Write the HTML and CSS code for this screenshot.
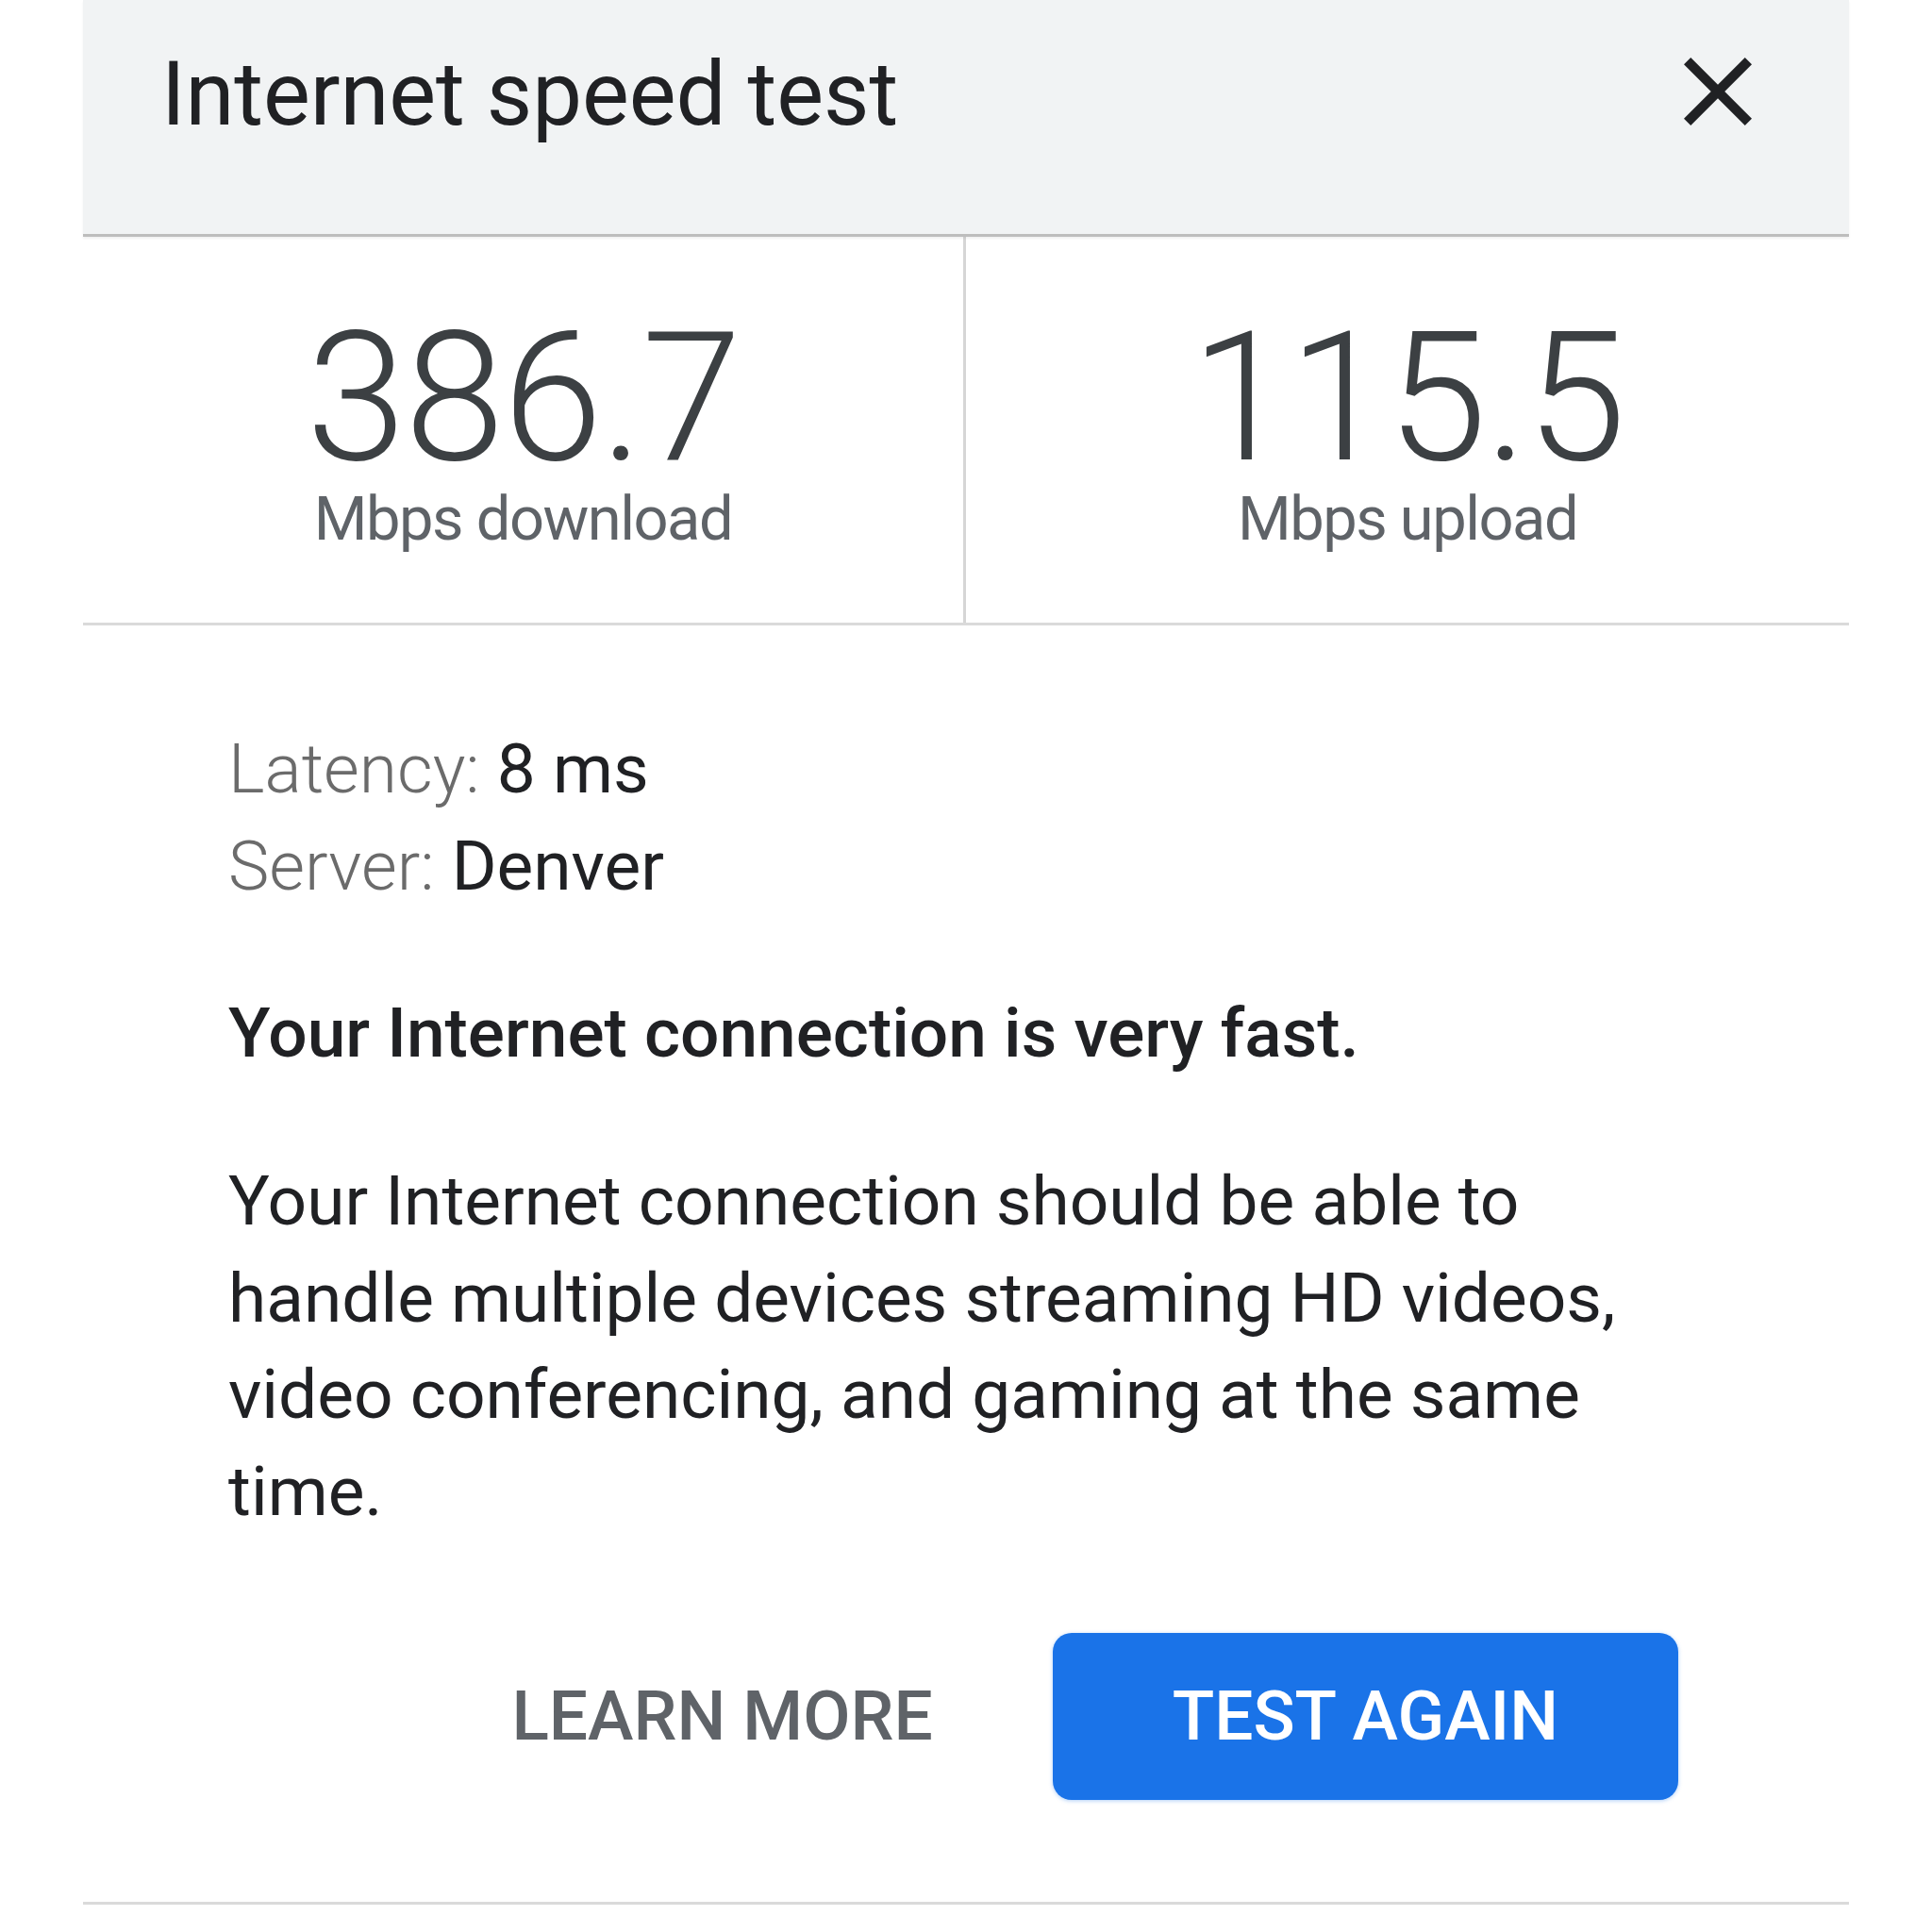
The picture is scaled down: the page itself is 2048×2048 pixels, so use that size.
FILE: index.html
```html
<!DOCTYPE html>
<html lang="en">
<head>
<meta charset="utf-8">
<title>Internet speed test</title>
<link rel="stylesheet" href="styles.css">
</head>
<body>
<div class="card">
  <header class="header">
    <h1 class="title">Internet speed test</h1>
    <svg class="close" viewBox="5 5 14 14" width="72" height="72" aria-label="Close">
      <path d="M19 6.41L17.59 5 12 10.59 6.41 5 5 6.41 10.59 12 5 17.59 6.41 19 12 13.41 17.59 19 19 17.59 13.41 12z" fill="#202124"/>
    </svg>
  </header>
  <section class="stats">
    <div class="stat">
      <div class="value">386.7</div>
      <div class="unit">Mbps download</div>
    </div>
    <div class="stat">
      <div class="value">115.5</div>
      <div class="unit">Mbps upload</div>
    </div>
  </section>
  <section class="details">
    <div class="meta">
      <div><span class="label">Latency:</span> <span class="val">8 ms</span></div>
      <div><span class="label">Server:</span> <span class="val">Denver</span></div>
    </div>
    <p class="verdict">Your Internet connection is very fast.</p>
    <p class="desc">Your Internet connection should be able to handle multiple devices streaming HD videos, video conferencing, and gaming at the same time.</p>
    <div class="actions">
      <button class="btn btn-text">Learn more</button>
      <button class="btn btn-filled">Test again</button>
    </div>
  </section>
</div>
</body>
</html>
```

FILE: styles.css
```css
html, body {
  margin: 0;
  padding: 0;
  background: #ffffff;
}
body {
  font-family: Roboto, "Noto Sans", "Liberation Sans", sans-serif;
  color: #202124;
}
.card {
  margin-left: 88px;
  width: 1872px;
}
.header {
  height: 251px;
  box-sizing: border-box;
  background: #f1f3f4;
  border-bottom: 3px solid #bdbdbd;
  box-shadow: 0 2px 2px rgba(0, 0, 0, 0.06);
  display: flex;
  justify-content: space-between;
  align-items: flex-start;
  padding: 0 103px 0 83px;
  position: relative;
}
.title {
  margin: 0;
  padding-top: 53px;
  font-size: 94px;
  font-weight: 400;
  line-height: 1;
  color: #202124;
  letter-spacing: -0.1px;
}
.close {
  margin-top: 61px;
  display: block;
}
.stats {
  display: grid;
  grid-template-columns: 1fr 1fr;
  height: 412px;
  box-sizing: border-box;
  border-bottom: 3px solid #dadada;
}
.stat {
  display: flex;
  flex-direction: column;
  align-items: center;
  padding-top: 83px;
}
.stat:first-child {
  border-right: 3px solid #d6d6d6;
}
.value {
  font-size: 191px;
  line-height: 176px;
  color: #3c4043;
  font-weight: 300;
  letter-spacing: -2px;
}
.unit {
  margin-top: 8px;
  font-size: 65px;
  line-height: 65px;
  color: #5f6368;
  font-weight: 400;
  letter-spacing: -1.5px;
}
.details {
  padding: 101px 154px 0 154px;
  border-bottom: 3px solid #dadada;
}
.meta {
  font-size: 73px;
  line-height: 103px;
}
.label {
  font-weight: 300;
  color: #6b6b6b;
}
.val {
  color: #202124;
}
.verdict {
  margin: 74px 0 0;
  font-size: 73px;
  line-height: 103px;
  font-weight: 500;
  color: #202124;
}
.desc {
  margin: 75px 0 0;
  font-size: 73px;
  line-height: 102.5px;
  color: #202124;
}
.actions {
  display: flex;
  justify-content: flex-end;
  margin: 99px 27px 0 0;
  padding-bottom: 108px;
}
.btn {
  font-family: Roboto, "Noto Sans", "Liberation Sans", sans-serif;
  font-size: 73px;
  font-weight: 500;
  text-transform: uppercase;
  line-height: 1;
  height: 177px;
  padding: 0 127px;
  border: none;
  border-radius: 20px;
  background: transparent;
}
.btn-text {
  color: #5f6368;
}
.btn-filled {
  background: #1a73e8;
  color: #ffffff;
  box-shadow: 0 1px 4px rgba(26, 115, 232, 0.35);
}
```
